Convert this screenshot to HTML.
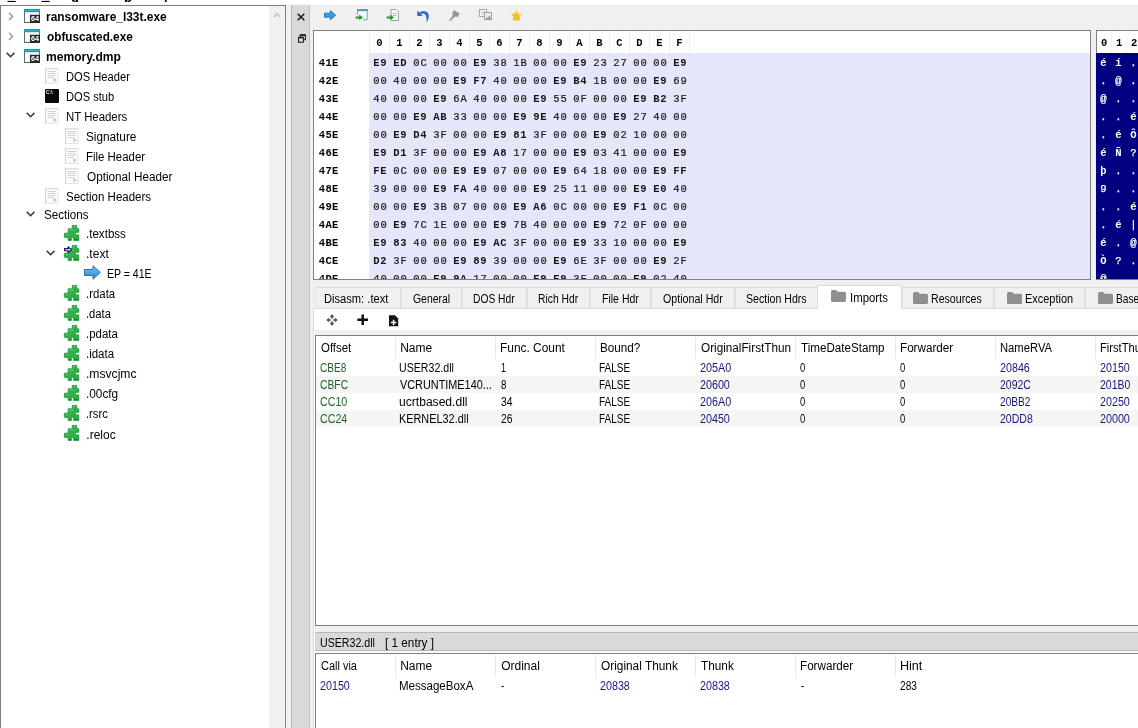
<!DOCTYPE html>
<html lang="en"><head><meta charset="utf-8"><title>PE-bear</title><style>
html,body{margin:0;padding:0}
body{width:1138px;height:728px;overflow:hidden;background:#fff;position:relative;font-family:"Liberation Sans",sans-serif;font-size:12px;color:#000}
#bg{position:absolute;left:0;top:4px;width:1138px;height:723px;background:#f0f0f0;border-top:1px solid #f8f8f8}
.ic{position:absolute;display:block;overflow:visible}
.t{position:absolute;white-space:pre;line-height:16px;transform-origin:0 0;font-family:"Liberation Sans",sans-serif;font-size:12px}
#txt{position:absolute;left:0;top:0;width:1138px;height:728px;will-change:transform}
#hex,#asc,#toptext,#tree,#strip{will-change:transform}
#tree{position:absolute;left:0;top:5px;width:284px;height:740px;background:#fff;border:1px solid #808080;border-bottom:0}
#tree .ic{margin-left:-1px;margin-top:-6px}
#tsb{position:absolute;left:268px;top:0;width:16px;height:740px;background:#f0f0f0}
#tsb .ic{margin:0}
#toptext{position:absolute;left:0;top:0;width:200px;height:2px;overflow:hidden;font-weight:700;font-size:13px;line-height:14px;white-space:pre}
#toptext span{position:absolute;top:-10.9px}
#strip{position:absolute;left:291px;top:5px;width:19px;height:730px;background:#d9d9d9;border-left:1px solid #b8b8b8;border-right:1px solid #c2c2c2;box-sizing:border-box}
#pl{position:absolute;left:313px;top:309px;width:1px;height:420px;background:#dcdcdc;border-right:1px solid #fff}
#hex{position:absolute;left:313px;top:30px;width:776px;height:248px;border:1px solid #808080;background:#fff;overflow:hidden}
#hexbg{position:absolute;left:55px;top:22px;width:740px;height:240px;background:#e6e6fa}
.hh,.ho,.hb,.ah,.ab{position:absolute;font-family:"Liberation Mono",monospace;font-size:10.5px;letter-spacing:0.9px;text-indent:0.9px;line-height:18px;height:18px;white-space:pre}
.hh{top:0;width:19px;height:22px;line-height:25px;text-align:center;font-weight:700;border-left:1px solid #f0f0f0}
.hsep{position:absolute;top:0;width:1px;height:22px;background:#f0f0f0}
.hb.hi{font-weight:700;color:#161616;-webkit-text-stroke:0;letter-spacing:0.7px;text-indent:0.7px}
.ho{left:3.8px;font-weight:700;margin-top:0px;letter-spacing:0.4px}
.hb{width:20px;text-align:center;color:#1c1c1c;margin-top:0px;margin-left:1px;-webkit-text-stroke:0.22px #1c1c1c}
#asc{position:absolute;left:1096px;top:30px;width:61px;height:248px;border:1px solid #808080;border-left:0;background:#fff;overflow:hidden}
#ascl{position:absolute;left:0;top:0;width:1px;height:22px;background:#808080}
#ascbg{position:absolute;left:0;top:22px;width:61px;height:240px;background:#000080}
.ah{top:0;width:14px;height:22px;line-height:25px;text-align:center;border-right:1px solid #f0f0f0;font-weight:700;text-indent:1.4px}
.ab{width:15px;text-align:center;color:#fff;margin-top:0px;margin-left:-1px;-webkit-text-stroke:0.25px #fff}
.ab.hi{font-weight:700;-webkit-text-stroke:0}
#pane{position:absolute;left:313px;top:308px;width:900px;height:21px;background:#fff;border-top:1px solid #dadada}
.tab{position:absolute;top:287px;height:22px;box-sizing:border-box;background:#f0f0f0;border:1px solid #dadada;border-left-color:#e4e4e4}
.tab.sel{top:285px;height:24px;background:#fff;border-color:#dcdcdc;border-bottom:0}
#t1{position:absolute;left:315px;top:335px;width:900px;height:289px;border:1px solid #808080;background:#fff;overflow:hidden}
#t2{position:absolute;left:315px;top:653px;width:900px;height:100px;border:1px solid #808080;background:#fff;overflow:hidden}
.alt{position:absolute;left:0;width:900px;height:17px;background:#f5f5f5}
.csep{position:absolute;top:0;width:1px;height:24px;background:linear-gradient(#f4f4f4,#e6e6e6 30%,#e6e6e6 70%,#f4f4f4)}
#ttl{position:absolute;left:315px;top:632px;width:900px;height:19px;background:#d9d9d9;box-sizing:border-box;border-top:1px solid #b8b8b8;border-bottom:1px solid #b8b8b8}
#ttlw{position:absolute;left:315px;top:651px;width:900px;height:2px;background:#fafafa}
</style></head><body><div id="bg"></div>
<div id="tree"><div id="tsb"><svg class="ic" style="left:4px;top:5.6px" width="8" height="6" viewBox="0 0 8 6"><path d="M0.9 5L4 1.7L7.1 5" fill="none" stroke="#cacaca" stroke-width="1.9"/></svg></div>
<svg class="ic" style="left:7.6px;top:11.8px" width="6" height="9" viewBox="0 0 6 9"><path d="M1 0.8L4.6 4.4L1 8" fill="none" stroke="#a0a0a0" stroke-width="1.6"/></svg>
<svg class="ic" style="left:24px;top:8.7px" width="16" height="14" viewBox="0 0 16 14"><rect x="0.5" y="0.5" width="15" height="13" fill="#f3f7fa" stroke="#5f6b70"/><rect x="0" y="0" width="16" height="3" fill="#2194ab"/><rect x="1" y="1" width="14" height="0.8" fill="#3fb4c8"/><rect x="1" y="3" width="14" height="1" fill="#c9ecf2"/><rect x="2" y="5" width="3" height="7.5" fill="#fff" stroke="#e3e7ea" stroke-width="0.5"/><rect x="6" y="5.8" width="10" height="8.2" fill="#252a25"/><text x="7.1" y="12.4" font-family="Liberation Sans" font-weight="700" font-size="7" fill="#fff" textLength="8" lengthAdjust="spacingAndGlyphs">64</text></svg>
<svg class="ic" style="left:7.6px;top:31.8px" width="6" height="9" viewBox="0 0 6 9"><path d="M1 0.8L4.6 4.4L1 8" fill="none" stroke="#a0a0a0" stroke-width="1.6"/></svg>
<svg class="ic" style="left:24px;top:28.7px" width="16" height="14" viewBox="0 0 16 14"><rect x="0.5" y="0.5" width="15" height="13" fill="#f3f7fa" stroke="#5f6b70"/><rect x="0" y="0" width="16" height="3" fill="#2194ab"/><rect x="1" y="1" width="14" height="0.8" fill="#3fb4c8"/><rect x="1" y="3" width="14" height="1" fill="#c9ecf2"/><rect x="2" y="5" width="3" height="7.5" fill="#fff" stroke="#e3e7ea" stroke-width="0.5"/><rect x="6" y="5.8" width="10" height="8.2" fill="#252a25"/><text x="7.1" y="12.4" font-family="Liberation Sans" font-weight="700" font-size="7" fill="#fff" textLength="8" lengthAdjust="spacingAndGlyphs">64</text></svg>
<svg class="ic" style="left:6.2px;top:52.4px" width="9.2" height="6.4" viewBox="0 0 10 7"><path d="M0.8 1L5 5.2L9.2 1" fill="none" stroke="#3a3a3a" stroke-width="1.7"/></svg>
<svg class="ic" style="left:24px;top:48.7px" width="16" height="14" viewBox="0 0 16 14"><rect x="0.5" y="0.5" width="15" height="13" fill="#f3f7fa" stroke="#5f6b70"/><rect x="0" y="0" width="16" height="3" fill="#2194ab"/><rect x="1" y="1" width="14" height="0.8" fill="#3fb4c8"/><rect x="1" y="3" width="14" height="1" fill="#c9ecf2"/><rect x="2" y="5" width="3" height="7.5" fill="#fff" stroke="#e3e7ea" stroke-width="0.5"/><rect x="6" y="5.8" width="10" height="8.2" fill="#252a25"/><text x="7.1" y="12.4" font-family="Liberation Sans" font-weight="700" font-size="7" fill="#fff" textLength="8" lengthAdjust="spacingAndGlyphs">64</text></svg>
<svg class="ic" style="left:45px;top:68.0px" width="14" height="16" viewBox="0 0 14 16"><path d="M0.5 0.5h12.5v15h-12.5z" fill="#fcfcfc" stroke="#e2e2e2"/><path d="M0.5 0.5v15" stroke="#cfcfcf"/><path d="M0.5 0.7h12.5" stroke="#dadada"/><path d="M2.5 3.5h8.5M2.5 5.5h8.5M2.5 7.5h8M2.5 9.5h6" stroke="#d2d2d2" stroke-width="1"/><path d="M8.2 9.5l3.8 2.6-3.8 2.6z" fill="#cfcfcf"/></svg>
<svg class="ic" style="left:45.2px;top:89.0px" width="14" height="14" viewBox="0 0 14 14"><rect x="0" y="0" width="14" height="14" rx="1" fill="#0a0a0a"/><text x="1" y="5.2" font-family="Liberation Sans" font-weight="700" font-size="5" fill="#e8e8e8">C:\</text></svg>
<svg class="ic" style="left:26.2px;top:112.4px" width="9.2" height="6.4" viewBox="0 0 10 7"><path d="M0.8 1L5 5.2L9.2 1" fill="none" stroke="#3a3a3a" stroke-width="1.7"/></svg>
<svg class="ic" style="left:45px;top:108.0px" width="14" height="16" viewBox="0 0 14 16"><path d="M0.5 0.5h12.5v15h-12.5z" fill="#fcfcfc" stroke="#e2e2e2"/><path d="M0.5 0.5v15" stroke="#cfcfcf"/><path d="M0.5 0.7h12.5" stroke="#dadada"/><path d="M2.5 3.5h8.5M2.5 5.5h8.5M2.5 7.5h8M2.5 9.5h6" stroke="#d2d2d2" stroke-width="1"/><path d="M8.2 9.5l3.8 2.6-3.8 2.6z" fill="#cfcfcf"/></svg>
<svg class="ic" style="left:65px;top:128.0px" width="14" height="16" viewBox="0 0 14 16"><path d="M0.5 0.5h12.5v15h-12.5z" fill="#fcfcfc" stroke="#e2e2e2"/><path d="M0.5 0.5v15" stroke="#cfcfcf"/><path d="M0.5 0.7h12.5" stroke="#dadada"/><path d="M2.5 3.5h8.5M2.5 5.5h8.5M2.5 7.5h8M2.5 9.5h6" stroke="#d2d2d2" stroke-width="1"/><path d="M8.2 9.5l3.8 2.6-3.8 2.6z" fill="#cfcfcf"/></svg>
<svg class="ic" style="left:65px;top:148.0px" width="14" height="16" viewBox="0 0 14 16"><path d="M0.5 0.5h12.5v15h-12.5z" fill="#fcfcfc" stroke="#e2e2e2"/><path d="M0.5 0.5v15" stroke="#cfcfcf"/><path d="M0.5 0.7h12.5" stroke="#dadada"/><path d="M2.5 3.5h8.5M2.5 5.5h8.5M2.5 7.5h8M2.5 9.5h6" stroke="#d2d2d2" stroke-width="1"/><path d="M8.2 9.5l3.8 2.6-3.8 2.6z" fill="#cfcfcf"/></svg>
<svg class="ic" style="left:65px;top:168.0px" width="14" height="16" viewBox="0 0 14 16"><path d="M0.5 0.5h12.5v15h-12.5z" fill="#fcfcfc" stroke="#e2e2e2"/><path d="M0.5 0.5v15" stroke="#cfcfcf"/><path d="M0.5 0.7h12.5" stroke="#dadada"/><path d="M2.5 3.5h8.5M2.5 5.5h8.5M2.5 7.5h8M2.5 9.5h6" stroke="#d2d2d2" stroke-width="1"/><path d="M8.2 9.5l3.8 2.6-3.8 2.6z" fill="#cfcfcf"/></svg>
<svg class="ic" style="left:45px;top:188.0px" width="14" height="16" viewBox="0 0 14 16"><path d="M0.5 0.5h12.5v15h-12.5z" fill="#fcfcfc" stroke="#e2e2e2"/><path d="M0.5 0.5v15" stroke="#cfcfcf"/><path d="M0.5 0.7h12.5" stroke="#dadada"/><path d="M2.5 3.5h8.5M2.5 5.5h8.5M2.5 7.5h8M2.5 9.5h6" stroke="#d2d2d2" stroke-width="1"/><path d="M8.2 9.5l3.8 2.6-3.8 2.6z" fill="#cfcfcf"/></svg>
<svg class="ic" style="left:26.2px;top:210.6px" width="9.2" height="6.4" viewBox="0 0 10 7"><path d="M0.8 1L5 5.2L9.2 1" fill="none" stroke="#3a3a3a" stroke-width="1.7"/></svg>
<svg class="ic" style="left:64px;top:224.6px" width="16" height="16" viewBox="0 0 16 16"><path d="M8.3 0.4H12.7V3.8H14.8V7.3H11.9Q11 8.6 11.9 9.9H14.8V15.4H9.7V12.2H7.4V15.4H4.2V12.6H1.2Q0.3 12.6 0.3 11.7V9Q0.3 8.1 1.2 8.1H4.2V3.8H8.3Z" fill="#2fb148" stroke="#1f9236" stroke-width="0.8" stroke-linejoin="round"/><path d="M5.2 5H10M9.3 1.5H11.5M1.5 9.3H4.5" stroke="#62cf74" stroke-width="1.1" fill="none"/><path d="M4.6 14h2.4v1.2h-2.4zM10 13.6h4.4v1.6h-4.4z" fill="#1c8c32"/></svg>
<svg class="ic" style="left:46.2px;top:249.50000000000003px" width="9.2" height="6.4" viewBox="0 0 10 7"><path d="M0.8 1L5 5.2L9.2 1" fill="none" stroke="#3a3a3a" stroke-width="1.7"/></svg>
<svg class="ic" style="left:64px;top:244.5px" width="16" height="16" viewBox="0 0 16 16"><path d="M8.3 0.4H12.7V3.8H14.8V7.3H11.9Q11 8.6 11.9 9.9H14.8V15.4H9.7V12.2H7.4V15.4H4.2V12.6H1.2Q0.3 12.6 0.3 11.7V9Q0.3 8.1 1.2 8.1H4.2V3.8H8.3Z" fill="#2fb148" stroke="#1f9236" stroke-width="0.8" stroke-linejoin="round"/><path d="M5.2 5H10M9.3 1.5H11.5M1.5 9.3H4.5" stroke="#62cf74" stroke-width="1.1" fill="none"/><path d="M4.6 14h2.4v1.2h-2.4zM10 13.6h4.4v1.6h-4.4z" fill="#1c8c32"/><path d="M0.6 3.6H4.2V2L7.6 4.7L4.2 7.4V5.8H0.6Z" fill="#fff" stroke="#10104a" stroke-width="1.1"/></svg>
<svg class="ic" style="left:84px;top:265.3px" width="17" height="15" viewBox="0 0 17 15"><defs><linearGradient id="ag13" x1="0" y1="0" x2="0" y2="1"><stop offset="0" stop-color="#7cc4f0"/><stop offset="1" stop-color="#2a84c6"/></linearGradient></defs><path d="M0.5 4.5H9V0.8L16.3 7.5L9 14.2V10.5H0.5Z" fill="url(#ag13)" stroke="#2273ad" stroke-width="1"/></svg>
<svg class="ic" style="left:64px;top:284.7px" width="16" height="16" viewBox="0 0 16 16"><path d="M8.3 0.4H12.7V3.8H14.8V7.3H11.9Q11 8.6 11.9 9.9H14.8V15.4H9.7V12.2H7.4V15.4H4.2V12.6H1.2Q0.3 12.6 0.3 11.7V9Q0.3 8.1 1.2 8.1H4.2V3.8H8.3Z" fill="#2fb148" stroke="#1f9236" stroke-width="0.8" stroke-linejoin="round"/><path d="M5.2 5H10M9.3 1.5H11.5M1.5 9.3H4.5" stroke="#62cf74" stroke-width="1.1" fill="none"/><path d="M4.6 14h2.4v1.2h-2.4zM10 13.6h4.4v1.6h-4.4z" fill="#1c8c32"/></svg>
<svg class="ic" style="left:64px;top:304.8px" width="16" height="16" viewBox="0 0 16 16"><path d="M8.3 0.4H12.7V3.8H14.8V7.3H11.9Q11 8.6 11.9 9.9H14.8V15.4H9.7V12.2H7.4V15.4H4.2V12.6H1.2Q0.3 12.6 0.3 11.7V9Q0.3 8.1 1.2 8.1H4.2V3.8H8.3Z" fill="#2fb148" stroke="#1f9236" stroke-width="0.8" stroke-linejoin="round"/><path d="M5.2 5H10M9.3 1.5H11.5M1.5 9.3H4.5" stroke="#62cf74" stroke-width="1.1" fill="none"/><path d="M4.6 14h2.4v1.2h-2.4zM10 13.6h4.4v1.6h-4.4z" fill="#1c8c32"/></svg>
<svg class="ic" style="left:64px;top:324.7px" width="16" height="16" viewBox="0 0 16 16"><path d="M8.3 0.4H12.7V3.8H14.8V7.3H11.9Q11 8.6 11.9 9.9H14.8V15.4H9.7V12.2H7.4V15.4H4.2V12.6H1.2Q0.3 12.6 0.3 11.7V9Q0.3 8.1 1.2 8.1H4.2V3.8H8.3Z" fill="#2fb148" stroke="#1f9236" stroke-width="0.8" stroke-linejoin="round"/><path d="M5.2 5H10M9.3 1.5H11.5M1.5 9.3H4.5" stroke="#62cf74" stroke-width="1.1" fill="none"/><path d="M4.6 14h2.4v1.2h-2.4zM10 13.6h4.4v1.6h-4.4z" fill="#1c8c32"/></svg>
<svg class="ic" style="left:64px;top:344.6px" width="16" height="16" viewBox="0 0 16 16"><path d="M8.3 0.4H12.7V3.8H14.8V7.3H11.9Q11 8.6 11.9 9.9H14.8V15.4H9.7V12.2H7.4V15.4H4.2V12.6H1.2Q0.3 12.6 0.3 11.7V9Q0.3 8.1 1.2 8.1H4.2V3.8H8.3Z" fill="#2fb148" stroke="#1f9236" stroke-width="0.8" stroke-linejoin="round"/><path d="M5.2 5H10M9.3 1.5H11.5M1.5 9.3H4.5" stroke="#62cf74" stroke-width="1.1" fill="none"/><path d="M4.6 14h2.4v1.2h-2.4zM10 13.6h4.4v1.6h-4.4z" fill="#1c8c32"/></svg>
<svg class="ic" style="left:64px;top:364.6px" width="16" height="16" viewBox="0 0 16 16"><path d="M8.3 0.4H12.7V3.8H14.8V7.3H11.9Q11 8.6 11.9 9.9H14.8V15.4H9.7V12.2H7.4V15.4H4.2V12.6H1.2Q0.3 12.6 0.3 11.7V9Q0.3 8.1 1.2 8.1H4.2V3.8H8.3Z" fill="#2fb148" stroke="#1f9236" stroke-width="0.8" stroke-linejoin="round"/><path d="M5.2 5H10M9.3 1.5H11.5M1.5 9.3H4.5" stroke="#62cf74" stroke-width="1.1" fill="none"/><path d="M4.6 14h2.4v1.2h-2.4zM10 13.6h4.4v1.6h-4.4z" fill="#1c8c32"/></svg>
<svg class="ic" style="left:64px;top:384.7px" width="16" height="16" viewBox="0 0 16 16"><path d="M8.3 0.4H12.7V3.8H14.8V7.3H11.9Q11 8.6 11.9 9.9H14.8V15.4H9.7V12.2H7.4V15.4H4.2V12.6H1.2Q0.3 12.6 0.3 11.7V9Q0.3 8.1 1.2 8.1H4.2V3.8H8.3Z" fill="#2fb148" stroke="#1f9236" stroke-width="0.8" stroke-linejoin="round"/><path d="M5.2 5H10M9.3 1.5H11.5M1.5 9.3H4.5" stroke="#62cf74" stroke-width="1.1" fill="none"/><path d="M4.6 14h2.4v1.2h-2.4zM10 13.6h4.4v1.6h-4.4z" fill="#1c8c32"/></svg>
<svg class="ic" style="left:64px;top:404.8px" width="16" height="16" viewBox="0 0 16 16"><path d="M8.3 0.4H12.7V3.8H14.8V7.3H11.9Q11 8.6 11.9 9.9H14.8V15.4H9.7V12.2H7.4V15.4H4.2V12.6H1.2Q0.3 12.6 0.3 11.7V9Q0.3 8.1 1.2 8.1H4.2V3.8H8.3Z" fill="#2fb148" stroke="#1f9236" stroke-width="0.8" stroke-linejoin="round"/><path d="M5.2 5H10M9.3 1.5H11.5M1.5 9.3H4.5" stroke="#62cf74" stroke-width="1.1" fill="none"/><path d="M4.6 14h2.4v1.2h-2.4zM10 13.6h4.4v1.6h-4.4z" fill="#1c8c32"/></svg>
<svg class="ic" style="left:64px;top:424.9px" width="16" height="16" viewBox="0 0 16 16"><path d="M8.3 0.4H12.7V3.8H14.8V7.3H11.9Q11 8.6 11.9 9.9H14.8V15.4H9.7V12.2H7.4V15.4H4.2V12.6H1.2Q0.3 12.6 0.3 11.7V9Q0.3 8.1 1.2 8.1H4.2V3.8H8.3Z" fill="#2fb148" stroke="#1f9236" stroke-width="0.8" stroke-linejoin="round"/><path d="M5.2 5H10M9.3 1.5H11.5M1.5 9.3H4.5" stroke="#62cf74" stroke-width="1.1" fill="none"/><path d="M4.6 14h2.4v1.2h-2.4zM10 13.6h4.4v1.6h-4.4z" fill="#1c8c32"/></svg>
</div>
<div id="toptext"><span style="left:8px;-webkit-text-stroke:0.7px #000">_</span><span style="left:42px;-webkit-text-stroke:0.7px #000">_</span><span style="left:71px;top:-9.5px">g</span><span style="left:124px;top:-9.5px">p</span><span style="left:163px;top:-9.4px">]</span></div>
<div id="strip"><svg class="ic" style="left:4.9px;top:8.2px" width="8" height="8" viewBox="0 0 8 8"><path d="M0.7 0.7L7.3 7.3M7.3 0.7L0.7 7.3" stroke="#1c1c1c" stroke-width="1.6"/></svg><svg class="ic" style="left:6.1px;top:28.9px" width="8" height="9" viewBox="0 0 9 10"><path d="M2.5 3V0.8H8.3V6.5H6" fill="none" stroke="#1c1c1c" stroke-width="1.2"/><path d="M2.5 1.3H8.3" stroke="#1c1c1c" stroke-width="1.6"/><rect x="0.6" y="3.6" width="5.4" height="5.6" fill="none" stroke="#1c1c1c" stroke-width="1.2"/><path d="M0.6 4H6" stroke="#1c1c1c" stroke-width="1.6"/></svg></div>
<svg class="ic" style="left:323.6px;top:9.6px" width="12.2" height="10.4" viewBox="0 0 13 11"><path d="M0.5 3.3H6.8V0.6L12.5 5.5L6.8 10.4V7.7H0.5Z" fill="#3a98dc" stroke="#1f6fb0" stroke-width="0.9"/></svg>
<svg class="ic" style="left:354.5px;top:9px" width="13" height="12" viewBox="0 0 13 12"><path d="M2.5 6V0.8H12.2V10.8H8" fill="#f4fafc" stroke="#5fb0c4" stroke-width="1"/><rect x="2" y="0.3" width="10.8" height="1.8" fill="#3a9db4"/><path d="M0.6 7.4H4.2V5.6L8 8.4L4.2 11.2V9.4H0.6Z" fill="#1f9a2e"/></svg>
<svg class="ic" style="left:385.5px;top:9px" width="13" height="12" viewBox="0 0 13 12"><path d="M5 0.5H10L12.5 3V11.5H5Z" fill="#fafafa" stroke="#9a9a9a" stroke-width="0.9"/><path d="M7 4.5h3.5M7 6.5h3.5" stroke="#b0b0b0"/><path d="M0.6 7.4H4.2V5.6L8 8.4L4.2 11.2V9.4H0.6Z" fill="#1f9a2e"/></svg>
<svg class="ic" style="left:416.5px;top:9.5px" width="13" height="12" viewBox="0 0 13 12"><path d="M0.3 0.5V6H5.7L3.8 4.1Q6.3 2.6 8.2 4.4Q10 6.6 9.6 12.5Q13.5 6.5 10.6 2.6Q7 -0.8 2.3 2.6Z" fill="#3166cc"/></svg>
<svg class="ic" style="left:449px;top:10px" width="11" height="11" viewBox="0 0 11 11"><path d="M5.2 0.3L10.7 3.6L8.6 7L6 6.6L1.2 11L0.2 10.2L3.8 5.4L3.2 3Z" fill="#949494"/></svg>
<svg class="ic" style="left:479px;top:9px" width="13" height="11" viewBox="0 0 13 11"><rect x="0.5" y="0.5" width="7" height="7" fill="#f8f8f8" stroke="#a8a8a8"/><path d="M2 3h4M2 5h4" stroke="#bdbdbd"/><rect x="5.5" y="3.5" width="7" height="7" fill="#ececec" stroke="#a0a0a0"/><path d="M7 8.5h2.5v-2l2.5 2.6l-2.5 2v-1.3H7Z" fill="#8f8f8f"/></svg>
<svg class="ic" style="left:511px;top:10px" width="11" height="11" viewBox="0 0 11 11"><path d="M5.5 0L7.2 3.4L11 4L8.6 6.6L9.2 10.6H1.8L2.4 6.6L0 4L3.8 3.4Z" fill="#f2c11d"/><path d="M5.5 1.5L6.6 4L9.3 4.5L7.5 6.3" stroke="#ffe36b" stroke-width="0.8" fill="none"/></svg>
<div id="hex"><div id="hexbg"></div>
<div class="hh" style="left:55px">0</div>
<div class="hh" style="left:75px">1</div>
<div class="hh" style="left:95px">2</div>
<div class="hh" style="left:115px">3</div>
<div class="hh" style="left:135px">4</div>
<div class="hh" style="left:155px">5</div>
<div class="hh" style="left:175px">6</div>
<div class="hh" style="left:195px">7</div>
<div class="hh" style="left:215px">8</div>
<div class="hh" style="left:235px">9</div>
<div class="hh" style="left:255px">A</div>
<div class="hh" style="left:275px">B</div>
<div class="hh" style="left:295px">C</div>
<div class="hh" style="left:315px">D</div>
<div class="hh" style="left:335px">E</div>
<div class="hh" style="left:355px">F</div>
<div class="hsep" style="left:375px"></div>
<div class="ho" style="top:23px">41E</div>
<div class="hb hi" style="left:55px;top:23px">E9</div>
<div class="hb hi" style="left:75px;top:23px">ED</div>
<div class="hb" style="left:95px;top:23px">0C</div>
<div class="hb" style="left:115px;top:23px">00</div>
<div class="hb" style="left:135px;top:23px">00</div>
<div class="hb hi" style="left:155px;top:23px">E9</div>
<div class="hb" style="left:175px;top:23px">38</div>
<div class="hb" style="left:195px;top:23px">1B</div>
<div class="hb" style="left:215px;top:23px">00</div>
<div class="hb" style="left:235px;top:23px">00</div>
<div class="hb hi" style="left:255px;top:23px">E9</div>
<div class="hb" style="left:275px;top:23px">23</div>
<div class="hb" style="left:295px;top:23px">27</div>
<div class="hb" style="left:315px;top:23px">00</div>
<div class="hb" style="left:335px;top:23px">00</div>
<div class="hb hi" style="left:355px;top:23px">E9</div>
<div class="ho" style="top:41px">42E</div>
<div class="hb" style="left:55px;top:41px">00</div>
<div class="hb" style="left:75px;top:41px">40</div>
<div class="hb" style="left:95px;top:41px">00</div>
<div class="hb" style="left:115px;top:41px">00</div>
<div class="hb hi" style="left:135px;top:41px">E9</div>
<div class="hb hi" style="left:155px;top:41px">F7</div>
<div class="hb" style="left:175px;top:41px">40</div>
<div class="hb" style="left:195px;top:41px">00</div>
<div class="hb" style="left:215px;top:41px">00</div>
<div class="hb hi" style="left:235px;top:41px">E9</div>
<div class="hb hi" style="left:255px;top:41px">B4</div>
<div class="hb" style="left:275px;top:41px">1B</div>
<div class="hb" style="left:295px;top:41px">00</div>
<div class="hb" style="left:315px;top:41px">00</div>
<div class="hb hi" style="left:335px;top:41px">E9</div>
<div class="hb" style="left:355px;top:41px">69</div>
<div class="ho" style="top:59px">43E</div>
<div class="hb" style="left:55px;top:59px">40</div>
<div class="hb" style="left:75px;top:59px">00</div>
<div class="hb" style="left:95px;top:59px">00</div>
<div class="hb hi" style="left:115px;top:59px">E9</div>
<div class="hb" style="left:135px;top:59px">6A</div>
<div class="hb" style="left:155px;top:59px">40</div>
<div class="hb" style="left:175px;top:59px">00</div>
<div class="hb" style="left:195px;top:59px">00</div>
<div class="hb hi" style="left:215px;top:59px">E9</div>
<div class="hb" style="left:235px;top:59px">55</div>
<div class="hb" style="left:255px;top:59px">0F</div>
<div class="hb" style="left:275px;top:59px">00</div>
<div class="hb" style="left:295px;top:59px">00</div>
<div class="hb hi" style="left:315px;top:59px">E9</div>
<div class="hb hi" style="left:335px;top:59px">B2</div>
<div class="hb" style="left:355px;top:59px">3F</div>
<div class="ho" style="top:77px">44E</div>
<div class="hb" style="left:55px;top:77px">00</div>
<div class="hb" style="left:75px;top:77px">00</div>
<div class="hb hi" style="left:95px;top:77px">E9</div>
<div class="hb hi" style="left:115px;top:77px">AB</div>
<div class="hb" style="left:135px;top:77px">33</div>
<div class="hb" style="left:155px;top:77px">00</div>
<div class="hb" style="left:175px;top:77px">00</div>
<div class="hb hi" style="left:195px;top:77px">E9</div>
<div class="hb hi" style="left:215px;top:77px">9E</div>
<div class="hb" style="left:235px;top:77px">40</div>
<div class="hb" style="left:255px;top:77px">00</div>
<div class="hb" style="left:275px;top:77px">00</div>
<div class="hb hi" style="left:295px;top:77px">E9</div>
<div class="hb" style="left:315px;top:77px">27</div>
<div class="hb" style="left:335px;top:77px">40</div>
<div class="hb" style="left:355px;top:77px">00</div>
<div class="ho" style="top:95px">45E</div>
<div class="hb" style="left:55px;top:95px">00</div>
<div class="hb hi" style="left:75px;top:95px">E9</div>
<div class="hb hi" style="left:95px;top:95px">D4</div>
<div class="hb" style="left:115px;top:95px">3F</div>
<div class="hb" style="left:135px;top:95px">00</div>
<div class="hb" style="left:155px;top:95px">00</div>
<div class="hb hi" style="left:175px;top:95px">E9</div>
<div class="hb hi" style="left:195px;top:95px">81</div>
<div class="hb" style="left:215px;top:95px">3F</div>
<div class="hb" style="left:235px;top:95px">00</div>
<div class="hb" style="left:255px;top:95px">00</div>
<div class="hb hi" style="left:275px;top:95px">E9</div>
<div class="hb" style="left:295px;top:95px">02</div>
<div class="hb" style="left:315px;top:95px">10</div>
<div class="hb" style="left:335px;top:95px">00</div>
<div class="hb" style="left:355px;top:95px">00</div>
<div class="ho" style="top:113px">46E</div>
<div class="hb hi" style="left:55px;top:113px">E9</div>
<div class="hb hi" style="left:75px;top:113px">D1</div>
<div class="hb" style="left:95px;top:113px">3F</div>
<div class="hb" style="left:115px;top:113px">00</div>
<div class="hb" style="left:135px;top:113px">00</div>
<div class="hb hi" style="left:155px;top:113px">E9</div>
<div class="hb hi" style="left:175px;top:113px">A8</div>
<div class="hb" style="left:195px;top:113px">17</div>
<div class="hb" style="left:215px;top:113px">00</div>
<div class="hb" style="left:235px;top:113px">00</div>
<div class="hb hi" style="left:255px;top:113px">E9</div>
<div class="hb" style="left:275px;top:113px">03</div>
<div class="hb" style="left:295px;top:113px">41</div>
<div class="hb" style="left:315px;top:113px">00</div>
<div class="hb" style="left:335px;top:113px">00</div>
<div class="hb hi" style="left:355px;top:113px">E9</div>
<div class="ho" style="top:131px">47E</div>
<div class="hb hi" style="left:55px;top:131px">FE</div>
<div class="hb" style="left:75px;top:131px">0C</div>
<div class="hb" style="left:95px;top:131px">00</div>
<div class="hb" style="left:115px;top:131px">00</div>
<div class="hb hi" style="left:135px;top:131px">E9</div>
<div class="hb hi" style="left:155px;top:131px">E9</div>
<div class="hb" style="left:175px;top:131px">07</div>
<div class="hb" style="left:195px;top:131px">00</div>
<div class="hb" style="left:215px;top:131px">00</div>
<div class="hb hi" style="left:235px;top:131px">E9</div>
<div class="hb" style="left:255px;top:131px">64</div>
<div class="hb" style="left:275px;top:131px">18</div>
<div class="hb" style="left:295px;top:131px">00</div>
<div class="hb" style="left:315px;top:131px">00</div>
<div class="hb hi" style="left:335px;top:131px">E9</div>
<div class="hb hi" style="left:355px;top:131px">FF</div>
<div class="ho" style="top:149px">48E</div>
<div class="hb" style="left:55px;top:149px">39</div>
<div class="hb" style="left:75px;top:149px">00</div>
<div class="hb" style="left:95px;top:149px">00</div>
<div class="hb hi" style="left:115px;top:149px">E9</div>
<div class="hb hi" style="left:135px;top:149px">FA</div>
<div class="hb" style="left:155px;top:149px">40</div>
<div class="hb" style="left:175px;top:149px">00</div>
<div class="hb" style="left:195px;top:149px">00</div>
<div class="hb hi" style="left:215px;top:149px">E9</div>
<div class="hb" style="left:235px;top:149px">25</div>
<div class="hb" style="left:255px;top:149px">11</div>
<div class="hb" style="left:275px;top:149px">00</div>
<div class="hb" style="left:295px;top:149px">00</div>
<div class="hb hi" style="left:315px;top:149px">E9</div>
<div class="hb hi" style="left:335px;top:149px">E0</div>
<div class="hb" style="left:355px;top:149px">40</div>
<div class="ho" style="top:167px">49E</div>
<div class="hb" style="left:55px;top:167px">00</div>
<div class="hb" style="left:75px;top:167px">00</div>
<div class="hb hi" style="left:95px;top:167px">E9</div>
<div class="hb" style="left:115px;top:167px">3B</div>
<div class="hb" style="left:135px;top:167px">07</div>
<div class="hb" style="left:155px;top:167px">00</div>
<div class="hb" style="left:175px;top:167px">00</div>
<div class="hb hi" style="left:195px;top:167px">E9</div>
<div class="hb hi" style="left:215px;top:167px">A6</div>
<div class="hb" style="left:235px;top:167px">0C</div>
<div class="hb" style="left:255px;top:167px">00</div>
<div class="hb" style="left:275px;top:167px">00</div>
<div class="hb hi" style="left:295px;top:167px">E9</div>
<div class="hb hi" style="left:315px;top:167px">F1</div>
<div class="hb" style="left:335px;top:167px">0C</div>
<div class="hb" style="left:355px;top:167px">00</div>
<div class="ho" style="top:185px">4AE</div>
<div class="hb" style="left:55px;top:185px">00</div>
<div class="hb hi" style="left:75px;top:185px">E9</div>
<div class="hb" style="left:95px;top:185px">7C</div>
<div class="hb" style="left:115px;top:185px">1E</div>
<div class="hb" style="left:135px;top:185px">00</div>
<div class="hb" style="left:155px;top:185px">00</div>
<div class="hb hi" style="left:175px;top:185px">E9</div>
<div class="hb" style="left:195px;top:185px">7B</div>
<div class="hb" style="left:215px;top:185px">40</div>
<div class="hb" style="left:235px;top:185px">00</div>
<div class="hb" style="left:255px;top:185px">00</div>
<div class="hb hi" style="left:275px;top:185px">E9</div>
<div class="hb" style="left:295px;top:185px">72</div>
<div class="hb" style="left:315px;top:185px">0F</div>
<div class="hb" style="left:335px;top:185px">00</div>
<div class="hb" style="left:355px;top:185px">00</div>
<div class="ho" style="top:203px">4BE</div>
<div class="hb hi" style="left:55px;top:203px">E9</div>
<div class="hb hi" style="left:75px;top:203px">83</div>
<div class="hb" style="left:95px;top:203px">40</div>
<div class="hb" style="left:115px;top:203px">00</div>
<div class="hb" style="left:135px;top:203px">00</div>
<div class="hb hi" style="left:155px;top:203px">E9</div>
<div class="hb hi" style="left:175px;top:203px">AC</div>
<div class="hb" style="left:195px;top:203px">3F</div>
<div class="hb" style="left:215px;top:203px">00</div>
<div class="hb" style="left:235px;top:203px">00</div>
<div class="hb hi" style="left:255px;top:203px">E9</div>
<div class="hb" style="left:275px;top:203px">33</div>
<div class="hb" style="left:295px;top:203px">10</div>
<div class="hb" style="left:315px;top:203px">00</div>
<div class="hb" style="left:335px;top:203px">00</div>
<div class="hb hi" style="left:355px;top:203px">E9</div>
<div class="ho" style="top:221px">4CE</div>
<div class="hb hi" style="left:55px;top:221px">D2</div>
<div class="hb" style="left:75px;top:221px">3F</div>
<div class="hb" style="left:95px;top:221px">00</div>
<div class="hb" style="left:115px;top:221px">00</div>
<div class="hb hi" style="left:135px;top:221px">E9</div>
<div class="hb hi" style="left:155px;top:221px">89</div>
<div class="hb" style="left:175px;top:221px">39</div>
<div class="hb" style="left:195px;top:221px">00</div>
<div class="hb" style="left:215px;top:221px">00</div>
<div class="hb hi" style="left:235px;top:221px">E9</div>
<div class="hb" style="left:255px;top:221px">6E</div>
<div class="hb" style="left:275px;top:221px">3F</div>
<div class="hb" style="left:295px;top:221px">00</div>
<div class="hb" style="left:315px;top:221px">00</div>
<div class="hb hi" style="left:335px;top:221px">E9</div>
<div class="hb" style="left:355px;top:221px">2F</div>
<div class="ho" style="top:239px">4DE</div>
<div class="hb" style="left:55px;top:239px">40</div>
<div class="hb" style="left:75px;top:239px">00</div>
<div class="hb" style="left:95px;top:239px">00</div>
<div class="hb hi" style="left:115px;top:239px">E9</div>
<div class="hb hi" style="left:135px;top:239px">9A</div>
<div class="hb" style="left:155px;top:239px">17</div>
<div class="hb" style="left:175px;top:239px">00</div>
<div class="hb" style="left:195px;top:239px">00</div>
<div class="hb hi" style="left:215px;top:239px">E9</div>
<div class="hb hi" style="left:235px;top:239px">E9</div>
<div class="hb" style="left:255px;top:239px">3F</div>
<div class="hb" style="left:275px;top:239px">00</div>
<div class="hb" style="left:295px;top:239px">00</div>
<div class="hb hi" style="left:315px;top:239px">E9</div>
<div class="hb" style="left:335px;top:239px">02</div>
<div class="hb" style="left:355px;top:239px">40</div>
</div>
<div id="asc"><div id="ascbg"></div><div id="ascl"></div>
<div class="ah" style="left:1px">0</div>
<div class="ah" style="left:16px">1</div>
<div class="ah" style="left:31px">2</div>
<div class="ab hi" style="left:1px;top:23px">é</div>
<div class="ab hi" style="left:16px;top:23px">í</div>
<div class="ab" style="left:31px;top:23px">.</div>
<div class="ab" style="left:1px;top:41px">.</div>
<div class="ab" style="left:16px;top:41px">@</div>
<div class="ab" style="left:31px;top:41px">.</div>
<div class="ab" style="left:1px;top:59px">@</div>
<div class="ab" style="left:16px;top:59px">.</div>
<div class="ab" style="left:31px;top:59px">.</div>
<div class="ab" style="left:1px;top:77px">.</div>
<div class="ab" style="left:16px;top:77px">.</div>
<div class="ab hi" style="left:31px;top:77px">é</div>
<div class="ab" style="left:1px;top:95px">.</div>
<div class="ab hi" style="left:16px;top:95px">é</div>
<div class="ab hi" style="left:31px;top:95px">Ô</div>
<div class="ab hi" style="left:1px;top:113px">é</div>
<div class="ab hi" style="left:16px;top:113px">Ñ</div>
<div class="ab" style="left:31px;top:113px">?</div>
<div class="ab hi" style="left:1px;top:131px">þ</div>
<div class="ab" style="left:16px;top:131px">.</div>
<div class="ab" style="left:31px;top:131px">.</div>
<div class="ab" style="left:1px;top:149px">9</div>
<div class="ab" style="left:16px;top:149px">.</div>
<div class="ab" style="left:31px;top:149px">.</div>
<div class="ab" style="left:1px;top:167px">.</div>
<div class="ab" style="left:16px;top:167px">.</div>
<div class="ab hi" style="left:31px;top:167px">é</div>
<div class="ab" style="left:1px;top:185px">.</div>
<div class="ab hi" style="left:16px;top:185px">é</div>
<div class="ab" style="left:31px;top:185px">|</div>
<div class="ab hi" style="left:1px;top:203px">é</div>
<div class="ab" style="left:16px;top:203px">.</div>
<div class="ab" style="left:31px;top:203px">@</div>
<div class="ab hi" style="left:1px;top:221px">Ò</div>
<div class="ab" style="left:16px;top:221px">?</div>
<div class="ab" style="left:31px;top:221px">.</div>
<div class="ab" style="left:1px;top:239px">@</div>
<div class="ab" style="left:16px;top:239px">.</div>
<div class="ab" style="left:31px;top:239px">.</div>
</div>
<div id="pane"></div><div id="pl"></div>
<div class="tab" style="left:315px;width:85.5px"></div>
<div class="tab" style="left:400.5px;width:61.5px"></div>
<div class="tab" style="left:462px;width:64.5px"></div>
<div class="tab" style="left:526.5px;width:63.5px"></div>
<div class="tab" style="left:590px;width:60.5px"></div>
<div class="tab" style="left:650.5px;width:84.5px"></div>
<div class="tab" style="left:735px;width:82.5px"></div>
<div class="tab sel" style="left:816.5px;width:85.0px"></div>
<svg class="ic" style="left:831px;top:290.4px" width="15" height="12" viewBox="0 0 15 12"><path d="M0 1.6Q0 0 1.6 0H5L6.8 1.8H13.4Q15 1.8 15 3.4V10.4Q15 12 13.4 12H1.6Q0 12 0 10.4Z" fill="#8f8f8f"/></svg>
<div class="tab" style="left:901.5px;width:92.0px"></div>
<svg class="ic" style="left:912.5px;top:291.5px" width="15" height="12" viewBox="0 0 15 12"><path d="M0 1.6Q0 0 1.6 0H5L6.8 1.8H13.4Q15 1.8 15 3.4V10.4Q15 12 13.4 12H1.6Q0 12 0 10.4Z" fill="#8f8f8f"/></svg>
<div class="tab" style="left:993.5px;width:91.5px"></div>
<svg class="ic" style="left:1006.5px;top:291.5px" width="15" height="12" viewBox="0 0 15 12"><path d="M0 1.6Q0 0 1.6 0H5L6.8 1.8H13.4Q15 1.8 15 3.4V10.4Q15 12 13.4 12H1.6Q0 12 0 10.4Z" fill="#8f8f8f"/></svg>
<div class="tab" style="left:1085px;width:95px"></div>
<svg class="ic" style="left:1097.5px;top:291.5px" width="15" height="12" viewBox="0 0 15 12"><path d="M0 1.6Q0 0 1.6 0H5L6.8 1.8H13.4Q15 1.8 15 3.4V10.4Q15 12 13.4 12H1.6Q0 12 0 10.4Z" fill="#8f8f8f"/></svg>
<svg class="ic" style="left:326px;top:314px" width="12" height="12" viewBox="0 0 12 12"><path d="M6 0L8.3 3.2H6.7V4.7H5.3V3.2H3.7Z" fill="#505050" transform="rotate(0 6 6)"/><path d="M6 0L8.3 3.2H6.7V4.7H5.3V3.2H3.7Z" fill="#505050" transform="rotate(90 6 6)"/><path d="M6 0L8.3 3.2H6.7V4.7H5.3V3.2H3.7Z" fill="#505050" transform="rotate(180 6 6)"/><path d="M6 0L8.3 3.2H6.7V4.7H5.3V3.2H3.7Z" fill="#505050" transform="rotate(270 6 6)"/></svg>
<svg class="ic" style="left:357.1px;top:314.2px" width="11.4" height="11.4" viewBox="0 0 12 12"><path d="M6 0.4V11.6M0.4 6H11.6" stroke="#111" stroke-width="2.6"/></svg>
<svg class="ic" style="left:389.2px;top:314.6px" width="9.2" height="11.6" viewBox="0 0 10 12"><path d="M0 0H6.5L10 3.5V12H0Z" fill="#111"/><path d="M5 4.8V10.8M2 7.8H8" stroke="#fff" stroke-width="1.7"/></svg>
<div id="t1">
<div class="alt" style="top:40px"></div><div class="alt" style="top:74px"></div>
<div class="csep" style="left:79px"></div>
<div class="csep" style="left:179px"></div>
<div class="csep" style="left:279px"></div>
<div class="csep" style="left:379px"></div>
<div class="csep" style="left:479px"></div>
<div class="csep" style="left:579px"></div>
<div class="csep" style="left:679px"></div>
<div class="csep" style="left:779px"></div>
</div>
<div id="ttl"></div><div id="ttlw"></div>
<div id="t2">
<div class="csep" style="left:79px"></div>
<div class="csep" style="left:179px"></div>
<div class="csep" style="left:279px"></div>
<div class="csep" style="left:379px"></div>
<div class="csep" style="left:479px"></div>
<div class="csep" style="left:579px"></div>
</div>
<div id="txt">
<span class="t" style="left:45.81px;top:9.05px;transform:scaleX(0.9942);font-weight:700;">ransomware_l33t.exe</span>
<span class="t" style="left:46.80px;top:29.05px;transform:scaleX(0.9816);font-weight:700;">obfuscated.exe</span>
<span class="t" style="left:45.79px;top:49.05px;transform:scaleX(1.0055);font-weight:700;">memory.dmp</span>
<span class="t" style="left:66.47px;top:69.05px;transform:scaleX(0.9294);">DOS Header</span>
<span class="t" style="left:66.47px;top:89.05px;transform:scaleX(0.9255);">DOS stub</span>
<span class="t" style="left:66.45px;top:109.05px;transform:scaleX(0.9492);">NT Headers</span>
<span class="t" style="left:86.22px;top:129.05px;transform:scaleX(0.9800);">Signature</span>
<span class="t" style="left:86.25px;top:149.05px;transform:scaleX(0.9525);">File Header</span>
<span class="t" style="left:87.20px;top:169.05px;transform:scaleX(0.9784);">Optional Header</span>
<span class="t" style="left:65.94px;top:189.05px;transform:scaleX(0.9591);">Section Headers</span>
<span class="t" style="left:43.73px;top:207.25px;transform:scaleX(0.9667);">Sections</span>
<span class="t" style="left:86.33px;top:226.25px;transform:scaleX(0.9650);">.textbss</span>
<span class="t" style="left:86.30px;top:246.15px;transform:scaleX(1.0045);">.text</span>
<span class="t" style="left:106.72px;top:266.25px;transform:scaleX(0.8780);">EP = 41E</span>
<span class="t" style="left:86.35px;top:286.35px;transform:scaleX(0.9500);">.rdata</span>
<span class="t" style="left:86.37px;top:306.45px;transform:scaleX(0.9346);">.data</span>
<span class="t" style="left:86.35px;top:326.35px;transform:scaleX(0.9545);">.pdata</span>
<span class="t" style="left:86.34px;top:346.25px;transform:scaleX(0.9552);">.idata</span>
<span class="t" style="left:86.29px;top:366.25px;transform:scaleX(1.0102);">.msvcjmc</span>
<span class="t" style="left:86.32px;top:386.35px;transform:scaleX(0.9839);">.00cfg</span>
<span class="t" style="left:86.37px;top:406.45px;transform:scaleX(0.9318);">.rsrc</span>
<span class="t" style="left:86.30px;top:426.55px;transform:scaleX(1.0000);">.reloc</span>
<span class="t" style="left:324.27px;top:291.10px;transform:scaleX(0.9275);">Disasm: .text</span>
<span class="t" style="left:413.20px;top:291.10px;transform:scaleX(0.8690);">General</span>
<span class="t" style="left:473.35px;top:291.10px;transform:scaleX(0.8542);">DOS Hdr</span>
<span class="t" style="left:538.34px;top:291.10px;transform:scaleX(0.8587);">Rich Hdr</span>
<span class="t" style="left:601.82px;top:291.10px;transform:scaleX(0.8780);">File Hdr</span>
<span class="t" style="left:663.20px;top:291.10px;transform:scaleX(0.8881);">Optional Hdr</span>
<span class="t" style="left:746.32px;top:291.10px;transform:scaleX(0.8824);">Section Hdrs</span>
<span class="t" style="left:849.75px;top:290.30px;transform:scaleX(0.9487);">Imports</span>
<span class="t" style="left:931.32px;top:291.10px;transform:scaleX(0.8839);">Resources</span>
<span class="t" style="left:1025.29px;top:291.10px;transform:scaleX(0.9118);">Exception</span>
<span class="t" style="left:1116.35px;top:291.10px;transform:scaleX(0.8500);">BaseReloc.</span>
<span class="t" style="left:321.20px;top:340.00px;transform:scaleX(0.9531);">Offset</span>
<span class="t" style="left:400.20px;top:340.00px;transform:scaleX(1.0000);">Name</span>
<span class="t" style="left:500.21px;top:340.00px;transform:scaleX(0.9923);">Func. Count</span>
<span class="t" style="left:600.23px;top:340.00px;transform:scaleX(0.9750);">Bound?</span>
<span class="t" style="left:701.20px;top:340.00px;transform:scaleX(0.9783);">OriginalFirstThun</span>
<span class="t" style="left:800.70px;top:340.00px;transform:scaleX(0.9686);">TimeDateStamp</span>
<span class="t" style="left:900.23px;top:340.00px;transform:scaleX(0.9722);">Forwarder</span>
<span class="t" style="left:1000.26px;top:340.00px;transform:scaleX(0.9364);">NameRVA</span>
<span class="t" style="left:1100.27px;top:340.00px;transform:scaleX(0.9286);">FirstThunk</span>
<span class="t" style="left:320.20px;top:360.00px;transform:scaleX(0.8387);color:#1d6428;">CBE8</span>
<span class="t" style="left:399.31px;top:360.00px;transform:scaleX(0.8852);">USER32.dll</span>
<span class="t" style="left:500.55px;top:360.00px;transform:scaleX(0.7500);">1</span>
<span class="t" style="left:599.37px;top:360.00px;transform:scaleX(0.8333);">FALSE</span>
<span class="t" style="left:700.20px;top:360.00px;transform:scaleX(0.9000);color:#17177a;">205A0</span>
<span class="t" style="left:800.20px;top:360.00px;transform:scaleX(0.7857);">0</span>
<span class="t" style="left:900.20px;top:360.00px;transform:scaleX(0.7857);">0</span>
<span class="t" style="left:1000.20px;top:360.00px;transform:scaleX(0.8939);color:#17177a;">20846</span>
<span class="t" style="left:1100.20px;top:360.00px;transform:scaleX(0.8939);color:#17177a;">20150</span>
<span class="t" style="left:320.20px;top:377.00px;transform:scaleX(0.8594);color:#1d6428;">CBFC</span>
<span class="t" style="left:400.20px;top:377.00px;transform:scaleX(0.9059);">VCRUNTIME140...</span>
<span class="t" style="left:500.50px;top:377.00px;transform:scaleX(0.8143);">8</span>
<span class="t" style="left:599.37px;top:377.00px;transform:scaleX(0.8333);">FALSE</span>
<span class="t" style="left:700.20px;top:377.00px;transform:scaleX(0.8939);color:#17177a;">20600</span>
<span class="t" style="left:800.20px;top:377.00px;transform:scaleX(0.7857);">0</span>
<span class="t" style="left:900.20px;top:377.00px;transform:scaleX(0.7857);">0</span>
<span class="t" style="left:1000.20px;top:377.00px;transform:scaleX(0.8714);color:#17177a;">2092C</span>
<span class="t" style="left:1100.20px;top:377.00px;transform:scaleX(0.8714);color:#17177a;">201B0</span>
<span class="t" style="left:320.20px;top:394.00px;transform:scaleX(0.8871);color:#1d6428;">CC10</span>
<span class="t" style="left:399.19px;top:394.00px;transform:scaleX(1.0075);">ucrtbased.dll</span>
<span class="t" style="left:500.50px;top:394.00px;transform:scaleX(0.8615);">34</span>
<span class="t" style="left:599.37px;top:394.00px;transform:scaleX(0.8333);">FALSE</span>
<span class="t" style="left:700.20px;top:394.00px;transform:scaleX(0.9000);color:#17177a;">206A0</span>
<span class="t" style="left:800.20px;top:394.00px;transform:scaleX(0.7857);">0</span>
<span class="t" style="left:900.20px;top:394.00px;transform:scaleX(0.7857);">0</span>
<span class="t" style="left:1000.20px;top:394.00px;transform:scaleX(0.8472);color:#17177a;">20BB2</span>
<span class="t" style="left:1100.20px;top:394.00px;transform:scaleX(0.8939);color:#17177a;">20250</span>
<span class="t" style="left:320.20px;top:411.00px;transform:scaleX(0.8871);color:#1d6428;">CC24</span>
<span class="t" style="left:399.29px;top:411.00px;transform:scaleX(0.9067);">KERNEL32.dll</span>
<span class="t" style="left:500.50px;top:411.00px;transform:scaleX(0.8615);">26</span>
<span class="t" style="left:599.37px;top:411.00px;transform:scaleX(0.8333);">FALSE</span>
<span class="t" style="left:700.20px;top:411.00px;transform:scaleX(0.8939);color:#17177a;">20450</span>
<span class="t" style="left:800.20px;top:411.00px;transform:scaleX(0.7857);">0</span>
<span class="t" style="left:900.20px;top:411.00px;transform:scaleX(0.7857);">0</span>
<span class="t" style="left:1000.20px;top:411.00px;transform:scaleX(0.8784);color:#17177a;">20DD8</span>
<span class="t" style="left:1100.20px;top:411.00px;transform:scaleX(0.8939);color:#17177a;">20000</span>
<span class="t" style="left:320.31px;top:635.00px;transform:scaleX(0.8852);">USER32.dll</span>
<span class="t" style="left:384.72px;top:635.00px;transform:scaleX(0.9796);">[ 1 entry ]</span>
<span class="t" style="left:321.20px;top:658.00px;transform:scaleX(0.9125);">Call via</span>
<span class="t" style="left:400.20px;top:658.00px;transform:scaleX(1.0000);">Name</span>
<span class="t" style="left:501.20px;top:658.00px;transform:scaleX(1.0000);">Ordinal</span>
<span class="t" style="left:601.20px;top:658.00px;transform:scaleX(0.9872);">Original Thunk</span>
<span class="t" style="left:701.20px;top:658.00px;transform:scaleX(0.9848);">Thunk</span>
<span class="t" style="left:800.23px;top:658.00px;transform:scaleX(0.9722);">Forwarder</span>
<span class="t" style="left:900.15px;top:658.00px;transform:scaleX(1.0476);">Hint</span>
<span class="t" style="left:320.20px;top:678.00px;transform:scaleX(0.8939);color:#17177a;">20150</span>
<span class="t" style="left:399.24px;top:678.00px;transform:scaleX(0.9605);">MessageBoxA</span>
<span class="t" style="left:501.00px;top:678.00px;transform:scaleX(0.8000);">-</span>
<span class="t" style="left:600.20px;top:678.00px;transform:scaleX(0.8939);color:#17177a;">20838</span>
<span class="t" style="left:700.20px;top:678.00px;transform:scaleX(0.8939);color:#17177a;">20838</span>
<span class="t" style="left:801.00px;top:678.00px;transform:scaleX(0.8000);">-</span>
<span class="t" style="left:900.20px;top:678.00px;transform:scaleX(0.8500);">283</span>
</div>
</body></html>
